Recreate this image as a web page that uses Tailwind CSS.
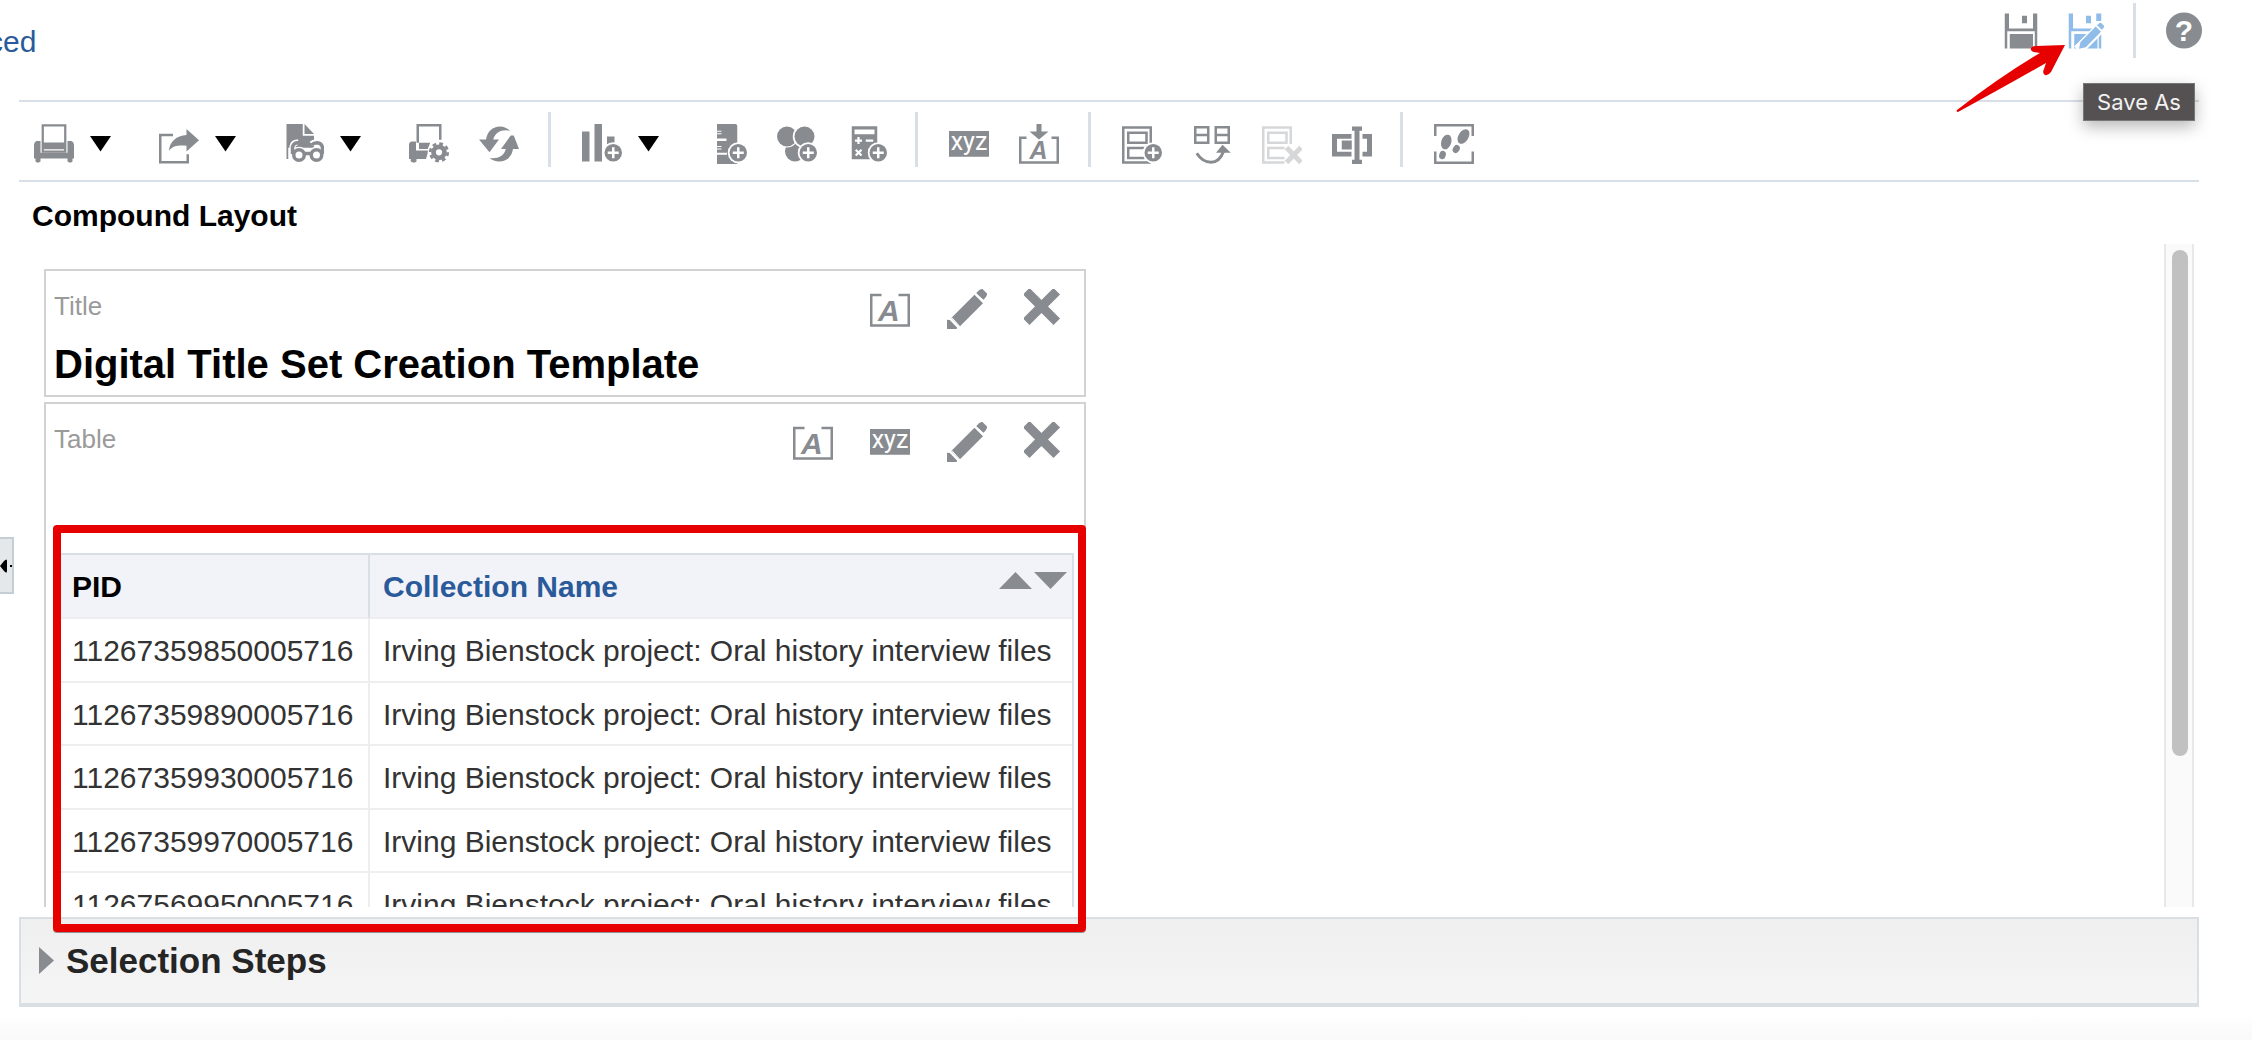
<!DOCTYPE html>
<html lang="en">
<head>
<meta charset="utf-8">
<title>Compound Layout</title>
<script src="https://cdn.jsdelivr.net/npm/@tailwindcss/browser@4"></script>
</head>
<body class="relative flex h-screen flex-col overflow-hidden bg-white font-['Liberation_Sans',Arial,sans-serif] text-[30px] text-[#333333]">

<!-- Shared icon symbols, 16-unit grid -->
<svg width="0" height="0" class="absolute" aria-hidden="true">
  <defs>
    <symbol id="plus" viewBox="0 0 16 16">
      <circle cx="12.5" cy="11.5" r="4.2" fill="#fff"/>
      <circle cx="12.5" cy="11.5" r="3.5" fill="#888b90"/>
      <path d="M12.5 9.3v4.4M10.3 11.5h4.4" stroke="#fff" stroke-width="1" fill="none"/>
    </symbol>
    <symbol id="pencil" viewBox="0 0 16 16">
      <path d="M1.7 11.6 11 2.3l3.4 3.4-9.3 9.3zM0 12.3l1.1.1 2.9 3-.1.6H0zM11.6 1.7l1.2-1.2q.7-.6 1.4-.5L16 1.8q.1.8-.5 1.5l-.9 1z" fill="#888b90"/>
      <path d="M1.9 11.4l3.4 3.8M11.3 1.5l3.6 3.6" stroke="#fff" stroke-width=".4"/>
    </symbol>
    <symbol id="remove" viewBox="0 0 16 16">
      <path d="M2.200 2.200l9.600 9.600M11.800 2.200L2.200 11.800" stroke="#888b90" stroke-width="3.700" fill="none" stroke-linecap="square"/>
    </symbol>
    <symbol id="format" viewBox="0 0 16 16">
      <path d="M4.6 2.4H.5v12.2h15V2.4h-4.1" stroke="#888b90" fill="none"/>
      <text x="3.2" y="12.9" font-family="Liberation Sans" font-size="12" font-weight="700" font-style="italic" fill="#888b90">A</text>
    </symbol>
    <symbol id="xyz" viewBox="0 0 16 16">
      <rect y="2.8" width="16" height="10.3" fill="#888b90"/>
      <text x="8" y="10.3" text-anchor="middle" font-family="Roboto" font-size="10" fill="#fff">xyz</text>
    </symbol>
  </defs>
</svg>

<header class="flex h-[100px] shrink-0 items-start justify-between pr-12">
  <a href="#" class="-ml-[97px] pt-[24px] text-[30px] leading-9 text-[#2a5a9a]">Advanced</a>
  <div class="flex items-start pt-[3px]">
    <button aria-label="Save" class="mt-2 mr-6 size-10">
      <svg viewBox="0 0 16 16" class="size-10" fill="#888b90"><path d="M1.500 1h1.700v6h9.600V1h1.700v14h-1V8.100H2.500V15h-1z"/><path d="M3.500 9.200h9.300V15H3.500zM8.400 1.900h2v3h-2z"/></svg>
    </button>
    <button aria-label="Save As" class="mt-2 mr-[28px] size-10">
      <svg viewBox="0 0 16 16" class="size-10" fill="#8fbce8"><path d="M1.500 1h1.700v6h9V8.100H2.500V15h-1zM12.500 1h2v3h-2zM8.400 1.900h2v3h-2zM3.700 9.200h9.300V15H3.700zM13.500 9h1v6h-1z"/><path d="M5.200 15.700l9.600-9.700" stroke="#fff" stroke-width="4.400"/><path d="M5.600 15.100l.6-2.700 6.100-6.200 2.100 2.100-6.100 6.200z"/><path d="M12.800 5.700l1-.900q.4-.2.800.1l.9.900q.3.400 0 .8l-.8.900z"/></svg>
    </button>
    <span class="mr-[28px] h-[55px] w-[3px] bg-[#d9dfe6]"></span>
    <button aria-label="Help" class="mt-2 size-10">
      <svg viewBox="0 0 16 16" class="size-10"><circle cx="8" cy="7.800" r="7.200" fill="#888b90"/><text x="8" y="12.100" text-anchor="middle" font-family="Liberation Sans" font-size="12" font-weight="700" fill="#fff">?</text></svg>
    </button>
  </div>
</header>

<!-- Toolbar -->
<div role="toolbar" aria-label="Layout tools" class="mr-[53px] ml-[19px] flex h-[82px] shrink-0 items-start border-y-2 border-[#d9dfe6] pt-[10px] pl-[15px] *:shrink-0">
  <button aria-label="Print" class="mt-3 flex items-center gap-[15px]">
    <svg viewBox="0 0 16 16" class="size-10" fill="#888b90"><path d="M1 6.800h14q1 .4 1 1.600v5.400h-.6V15q-.9.900-2 0v-1.200H2.600V15q-1.100.9-2 0v-1.200H0V8.400q0-1.200 1-1.600z"/><path d="M2.600 6.500h10.800v5H2.600z" fill="#fff"/><path d="M3.500.5h9v10.500h-9z" fill="#fff" stroke="#888b90" stroke-width=".9"/><path d="M3.300 7.400h9.400v2.700H3.300z"/></svg>
    <svg viewBox="0 0 23 16" class="h-4 w-[23px]"><path d="M1 0h21L11.500 15.500z"/></svg>
  </button>
  <button aria-label="Export" class="mt-3 ml-[47px] flex items-center gap-[15px]">
    <svg viewBox="0 0 16 16" class="size-10" fill="#888b90"><path d="M5.600 4.400H.5v10.900h11v-3.200" fill="none" stroke="#888b90"/><path d="M4 10.800C4.200 7 7 4.600 11 4.400V2l5 4.500-5 4.500V8.700C8 8.500 5.500 8.500 4 10.800z"/></svg>
    <svg viewBox="0 0 23 16" class="h-4 w-[23px]"><path d="M1 0h21L11.500 15.500z"/></svg>
  </button>
  <button aria-label="Preview" class="mt-3 ml-[47px] flex items-center gap-[15px]">
    <svg viewBox="0 0 16 16" class="size-10" fill="#888b90"><path d="M1 0h6.500v4.700H12V9.500H1.700V14H1zM8.200 0 12 4H8.200z"/><g fill="none" stroke="#fff" stroke-width="2.400"><circle cx="6" cy="12.400" r="2.100"/><circle cx="13" cy="12.400" r="2.100"/><path d="M3.400 12V9q.3-1.800 2.200-1.600M11 8q1.200-1 2.700-.4Q15.300 8 15.300 10v2"/></g><g fill="none" stroke="#888b90" stroke-width="1.400"><circle cx="6" cy="12.400" r="2.100"/><circle cx="13" cy="12.400" r="2.100"/><path d="M3.400 12V9.200q.4-1.700 2.100-1.700.8.100 1.200.7M11.200 8.300q.7-.8 2-.8 2 .2 2.200 2V12M8.200 11.800h2.600"/></g></svg>
    <svg viewBox="0 0 23 16" class="h-4 w-[23px]"><path d="M1 0h21L11.500 15.500z"/></svg>
  </button>
  <button aria-label="Print options" class="mt-3 ml-[47px]">
    <svg viewBox="0 0 16 16" class="size-10" fill="#888b90"><path d="M3.500 7.500v-7h9v5.800" fill="none" stroke="#888b90"/><path d="M1 7h1.800v3.600h5L6.800 14H3v1q-1 .9-2.300 0v-1H0V8q.2-1 1-1zM4 7.500h4.500L7.500 10H4z"/><circle cx="12" cy="11.300" r="4.500" fill="#fff"/><circle cx="12" cy="11.300" r="2.200" fill="none" stroke="#888b90" stroke-width="1.900"/><circle cx="12" cy="11.300" r="3.500" fill="none" stroke="#888b90" stroke-width="1.100" stroke-dasharray="1.500 1.249"/></svg>
  </button>
  <button aria-label="Refresh" class="mt-3 ml-[30px]">
    <svg viewBox="0 0 16 16" class="size-10" fill="#888b90"><path d="M0 6.200h2.800C3.300 3 5.500 1 8.400 1q2.400.100 4 1.700C9.500 2 6.500 3 5.700 6.200H8L4.200 11.300z"/><path d="M16 10h-2.400c-.4 3-2.600 5-5.600 5q-2.200-.1-3.800-1.400C7.300 14 10 13 10.700 10H8.800l3.900-5.400h1.200z"/></svg>
  </button>
  <span class="ml-[29px] h-[55px] w-[3px] bg-[#d9dfe6]"></span>
  <button aria-label="New view" class="mt-3 ml-[31px] flex items-center gap-[15px]">
    <svg viewBox="0 0 16 16" class="size-10" fill="#888b90"><path d="M0 3h3v12H0zM5 0h3v15H5zM10 5h3v3h-3z"/><use href="#plus"/></svg>
    <svg viewBox="0 0 23 16" class="h-4 w-[23px]"><path d="M1 0h21L11.500 15.500z"/></svg>
  </button>
  <button aria-label="New group" class="mt-3 ml-[47px]">
    <svg viewBox="0 0 16 16" class="size-10" fill="#888b90"><path d="M4 0h7.500q.6.200.6.800V16H4z"/><path d="M3.500 2.700h2.300v1.400H3.500zM3.500 5.800h4.300v1H3.500zM3.500 8.800h2.300v1.400H3.500zM3.500 11.500H8v.8H3.500z" fill="#fff"/><path d="M4 3.100h2v.6H4zM4 9.200h2v.6H4z"/><use href="#plus"/></svg>
  </button>
  <button aria-label="New calculated item" class="mt-3 ml-[30px]">
    <svg viewBox="0 0 16 16" class="size-10" fill="#888b90"><circle cx="7.200" cy="11" r="4"/><circle cx="4" cy="5" r="4.400" fill="#fff"/><circle cx="4" cy="5" r="4"/><circle cx="11" cy="5" r="4.700" fill="#fff"/><circle cx="11" cy="5" r="4"/><use href="#plus"/></svg>
  </button>
  <button aria-label="New calculated measure" class="mt-3 ml-[30px]">
    <svg viewBox="0 0 16 16" class="size-10" fill="#888b90"><path d="M1.900.9h10.200v13.200H1.900z"/><path d="M3 2.200h8v1.900H3z" fill="#fff"/><path d="M4.600 5.200v2.800M3.200 6.600H6M7.500 6.600h3M3.500 10.300l2.300 2.300M5.800 10.300l-2.300 2.300" stroke="#fff" stroke-width=".9"/><use href="#plus"/></svg>
  </button>
  <span class="ml-[28px] h-[55px] w-[3px] bg-[#d9dfe6]"></span>
  <button aria-label="Edit properties" class="mt-3 ml-[31px]">
    <svg viewBox="0 0 16 16" class="size-10"><use href="#xyz"/></svg>
  </button>
  <button aria-label="Import formatting" class="mt-3 ml-[30px]">
    <svg viewBox="0 0 16 16" class="size-10" fill="#888b90"><path d="M3 5.500H.5v9.900h15V5.500H13" fill="none" stroke="#888b90"/><path d="M7 0h2v3h2.800L8 6.200 4.200 3H7z"/><text x="4.200" y="13.900" font-family="Liberation Sans" font-size="10" font-weight="700" font-style="italic">A</text></svg>
  </button>
  <span class="ml-[29px] h-[55px] w-[3px] bg-[#d9dfe6]"></span>
  <button aria-label="Add section" class="mt-3 ml-[31px]">
    <svg viewBox="0 0 16 16" class="size-10"><path d="M11.500 8V1.400H.5v14h11M2.500 3.500h7.300v4H2.500zM9 9.600H2.500v4H9" fill="none" stroke="#888b90"/><use href="#plus"/></svg>
  </button>
  <button aria-label="Duplicate layout" class="mt-3 ml-[30px]">
    <svg viewBox="0 0 16 16" class="size-10"><path d="M1.300 1.300h5.200v6.200H1.300zM1.300 4.400h5.200M9.500 1.300h5.200v6.200H9.500zM9.500 4.400h5.200" fill="none" stroke="#888b90"/><path d="M1.900 11.700Q4.200 15.300 7.600 15.300T12.600 11" fill="none" stroke="#888b90" stroke-width="1.200"/><path d="M12.200 8.300l3.300 3.200H9.600z" fill="#888b90"/></svg>
  </button>
  <button aria-label="Delete layout" disabled class="mt-3 ml-[30px]">
    <svg viewBox="0 0 16 16" class="size-10"><path d="M11.500 8V1.400H.5v14h8.500M2.500 3.500h7.300v4H2.500zM9 9.600H2.500v4H9" fill="none" stroke="#d6d7d9"/><path d="M9.800 9.400l5.800 6M15.600 9.400l-5.800 6" stroke="#d6d7d9" stroke-width="2"/></svg>
  </button>
  <button aria-label="Rename layout" class="mt-3 ml-[30px]">
    <svg viewBox="0 0 16 16" class="size-10" fill="#888b90"><path d="M0 4h7.800v1.900H2v5.200h5.800V13H0zM3.900 6.600h4v3.600h-4zM12.200 4H16v9h-3.800v-1.900H14V5.900h-1.800zM8 1h4v1.700h-1v11.600h1V16H8v-1.700h1V2.700H8z"/></svg>
  </button>
  <span class="ml-[28px] h-[55px] w-[3px] bg-[#d9dfe6]"></span>
  <button aria-label="Show steps" class="mt-3 ml-[31px]">
    <svg viewBox="0 0 16 16" class="size-10" fill="#888b90"><path d="M.5 4.800V.5h15v4.300M.5 11v4.500h15V11" fill="none" stroke="#888b90"/><ellipse cx="4.900" cy="7.200" rx="2" ry="3" transform="rotate(18 4.900 7.200)"/><ellipse cx="3.400" cy="12.400" rx="1.300" ry="1.700" transform="rotate(18 3.400 12.400)"/><ellipse cx="11.800" cy="5" rx="2" ry="3.200" transform="rotate(32 11.800 5)"/><ellipse cx="8.900" cy="10" rx="1.300" ry="1.700" transform="rotate(32 8.900 10)"/></svg>
  </button>
</div>

<h1 class="shrink-0 pt-[16px] pb-[10px] pl-8 text-[30px] leading-9 font-bold text-black">Compound Layout</h1>

<!-- Scrolling canvas -->
<main class="mr-[58px] mb-[10px] ml-[44px] flex min-h-0 flex-1 justify-between overflow-hidden">
  <div class="w-[1042px] shrink-0 pt-[25px]">
    <section class="mb-[5px] border-2 border-[#d2d2d2] px-2 pb-2">
      <div class="flex items-start justify-between pt-[18px] pr-3">
        <span class="text-[26px] leading-[34px] text-[#9a9a9a]">Title</span>
        <div class="flex gap-[37px]">
          <button aria-label="Format title"><svg viewBox="0 0 16 16" class="size-10"><use href="#format"/></svg></button>
          <button aria-label="Edit title"><svg viewBox="0 0 16 16" class="size-10"><use href="#pencil"/></svg></button>
          <button aria-label="Remove title"><svg viewBox="0 0 16 16" class="size-10"><use href="#remove"/></svg></button>
        </div>
      </div>
      <h2 class="pt-[12px] text-[40px] leading-[46px] font-bold text-black">Digital Title Set Creation Template</h2>
    </section>

    <section class="border-2 border-[#d2d2d2] px-2 pb-[10px]">
      <div class="flex items-start justify-between pt-[18px] pr-3 pb-[91px]">
        <span class="text-[26px] leading-[34px] text-[#9a9a9a]">Table</span>
        <div class="flex gap-[37px]">
          <button aria-label="Format table"><svg viewBox="0 0 16 16" class="size-10"><use href="#format"/></svg></button>
          <button aria-label="Table properties"><svg viewBox="0 0 16 16" class="size-10"><use href="#xyz"/></svg></button>
          <button aria-label="Edit table"><svg viewBox="0 0 16 16" class="size-10"><use href="#pencil"/></svg></button>
          <button aria-label="Remove table"><svg viewBox="0 0 16 16" class="size-10"><use href="#remove"/></svg></button>
        </div>
      </div>
      <div class="pr-[2px] pl-1">
      <table class="w-full table-fixed border-separate border-spacing-0 border-t-2 border-r-2 border-[#d9dfe6] text-left leading-9 whitespace-nowrap">
        <thead>
          <tr class="h-[64px] bg-[#f2f3f8]">
            <th scope="col" class="w-[312px] border-r-2 border-b-2 border-r-[#d9dfe6] border-b-[#eeeeee] pt-[2px] pl-[14px] text-black">PID</th>
            <th scope="col" class="border-b-2 border-[#eeeeee] pt-[2px] pl-[13px]">
              <div class="flex items-center justify-between pr-[5px]">
                <a href="#" class="text-[#2a5a9a]">Collection Name</a>
                <span class="mb-[14px] flex gap-[2px]">
                  <button aria-label="Sort ascending"><svg viewBox="0 0 33 17" class="h-[17px] w-[33px]"><path d="M0 17 16.500 0 33 17z" fill="#888b90"/></svg></button>
                  <button aria-label="Sort descending"><svg viewBox="0 0 33 17" class="h-[17px] w-[33px]"><path d="M0 0h33L16.500 17z" fill="#888b90"/></svg></button>
                </span>
              </div>
            </th>
          </tr>
        </thead>
        <tbody class="[&_td]:border-b-2 [&_td]:border-[#eeeeee] [&_td]:pt-[2px]">
          <tr class="h-[64px]"><td class="border-r-2 pl-[14px]">11267359850005716</td><td class="pl-[13px]">Irving Bienstock project: Oral history interview files</td></tr>
          <tr class="h-[63px]"><td class="border-r-2 pl-[14px]">11267359890005716</td><td class="pl-[13px]">Irving Bienstock project: Oral history interview files</td></tr>
          <tr class="h-[64px]"><td class="border-r-2 pl-[14px]">11267359930005716</td><td class="pl-[13px]">Irving Bienstock project: Oral history interview files</td></tr>
          <tr class="h-[63px]"><td class="border-r-2 pl-[14px]">11267359970005716</td><td class="pl-[13px]">Irving Bienstock project: Oral history interview files</td></tr>
          <tr class="h-[64px]"><td class="border-r-2 pl-[14px]">11267569950005716</td><td class="pl-[13px]">Irving Bienstock project: Oral history interview files</td></tr>
        </tbody>
      </table>
      </div>
    </section>
  </div>
  <!-- Scrollbar -->
  <div class="w-[30px] border-x-2 border-[#e8e8e8] bg-[#fafafa] pt-[6px] pl-[6px]">
    <div class="h-[77%] w-4 rounded-full bg-[#c1c1c1]"></div>
  </div>
</main>

<!-- Collapsed panel -->
<section class="mr-[53px] ml-[19px] h-[90px] shrink-0 border-2 border-b-4 border-[#d9dfe3] bg-linear-to-b from-[#efefef] to-[#f5f5f5] pl-[18px]">
  <button class="flex items-center gap-3 pt-[20px] font-bold text-[#252525]">
    <svg viewBox="0 0 15 28" class="h-7 w-[15px]"><path d="M0 0 15 13.500 0 27z" fill="#888b90"/></svg>
    <span class="text-[35px] leading-[44px]">Selection Steps</span>
  </button>
</section>
<div class="h-[33px] shrink-0 bg-linear-to-b from-white from-20% to-[#f9f9f9]"></div>

<!-- Pane splitter handle -->
<button aria-label="Collapse pane" class="absolute top-[537px] left-0 flex h-[57px] w-[14px] items-center border-2 border-l-0 border-[#c4ced6] bg-[#e4e8ea]">
  <svg viewBox="0 0 12 14" class="h-[14px] w-3"><path d="M0 7 4 2q3-3 3 0v10q0 3-3 0zM10 6h2v2h-2z"/></svg>
</button>

<!-- Tooltip and callouts -->
<div role="tooltip" class="absolute top-[83px] right-[57px] flex h-[38px] w-28 items-center justify-center border border-[#777] bg-[#555152] font-['Inter',sans-serif] text-[22px] text-[#f2f2f2] shadow-[0_6px_16px_rgba(0,0,0,0.28)]">Save As</div>
<svg viewBox="0 0 110 70" class="absolute top-[44px] right-[186px] h-[70px] w-[110px]">
  <path d="M109 1 95 28q-3 4-6 3-3-2-1-6l2-6Q50 42 2 68q-2 0-1-2Q45 32 84 9l-6-1q-4-1-3-4 1-2 5-2z" fill="#e60000"/>
</svg>
<div class="absolute top-[525px] left-[53px] h-[407px] w-[1033px] rounded-[4px] border-8 border-[#e60000] shadow-[0_1px_0_rgba(0,0,0,0.4)]"></div>
</body>
</html>
